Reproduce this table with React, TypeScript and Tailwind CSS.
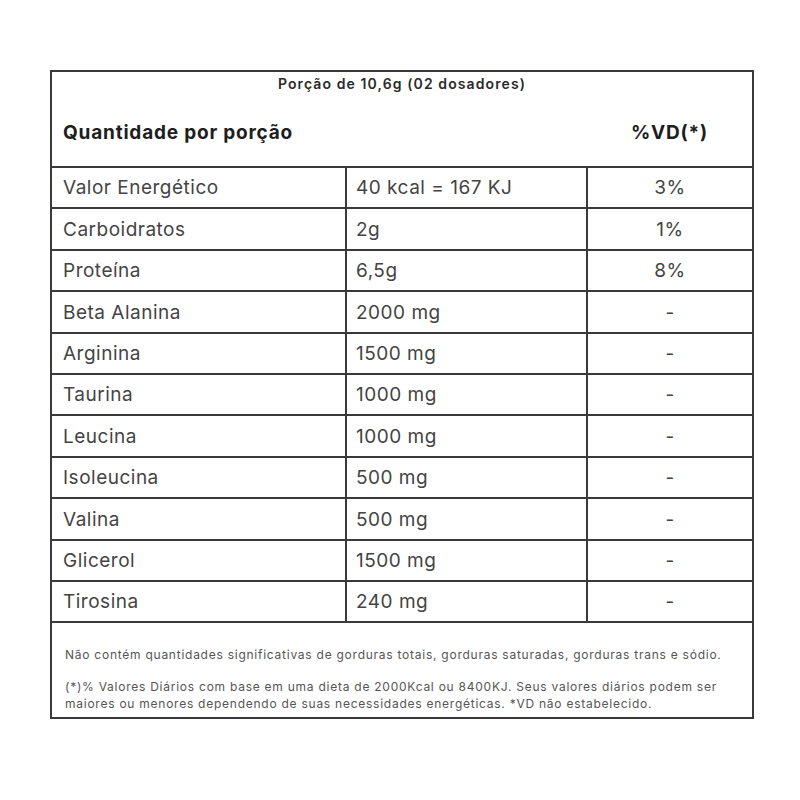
const rows = [
  ["Valor Energético", "40 kcal = 167 KJ", "3%"],
  ["Carboidratos", "2g", "1%"],
  ["Proteína", "6,5g", "8%"],
  ["Beta Alanina", "2000 mg", "-"],
  ["Arginina", "1500 mg", "-"],
  ["Taurina", "1000 mg", "-"],
  ["Leucina", "1000 mg", "-"],
  ["Isoleucina", "500 mg", "-"],
  ["Valina", "500 mg", "-"],
  ["Glicerol", "1500 mg", "-"],
  ["Tirosina", "240 mg", "-"],
]

export default function App() {
  return (
    <div className="w-[800px] h-[800px] bg-white pt-[70px] pl-[50px] font-['Inter',sans-serif]">
      <div className="w-[704px] border-2 border-[#3a3a3a]">
        <div className="h-[96px] border-b-2 border-[#3a3a3a] flex flex-col">
          <div className="text-center text-[14px] tracking-[1.1px] font-semibold text-[#2a2a2a] pt-[1px]">
            Porção de 10,6g (02 dosadores)
          </div>
          <div className="flex mt-[25px]">
            <div className="w-[535px] pl-[11px] text-[19px] tracking-[0.8px] font-bold text-[#1e1e1e]">Quantidade por porção</div>
            <div className="flex-1 text-center text-[19px] tracking-[0.8px] font-bold text-[#1e1e1e]">%VD(*)</div>
          </div>
        </div>
        {rows.map((r) => (
          <div key={r[0]} className="h-[41.4px] border-b-2 border-[#3a3a3a] flex text-[19px] tracking-[0.5px] text-[#444]">
            <div className="w-[295px] border-r-2 border-[#3a3a3a] pl-[11px] pt-[2px] flex items-center">{r[0]}</div>
            <div className="w-[241px] border-r-2 border-[#3a3a3a] pl-[9px] pt-[2px] flex items-center">{r[1]}</div>
            <div className="flex-1 pt-[2px] flex items-center justify-center">{r[2]}</div>
          </div>
        ))}
        <div className="h-[94px] pl-[13px] pt-[23px] text-[12px] tracking-[0.75px] text-[#555] leading-[17px]">
          <p>Não contém quantidades significativas de gorduras totais, gorduras saturadas, gorduras trans e sódio.</p>
          <p className="mt-[15px]">
            (*)% Valores Diários com base em uma dieta de 2000Kcal ou 8400KJ. Seus valores diários podem ser
            <br />
            maiores ou menores dependendo de suas necessidades energéticas. *VD não estabelecido.
          </p>
        </div>
      </div>
    </div>
  )
}
